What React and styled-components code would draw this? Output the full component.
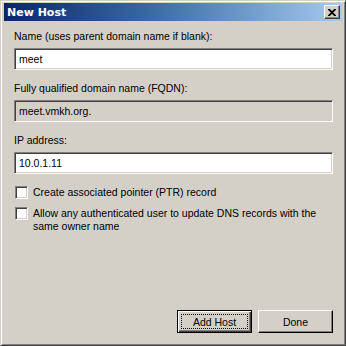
import styled, { createGlobalStyle } from 'styled-components';

const Global = createGlobalStyle`
  html, body { margin: 0; padding: 0; background: #d4d0c8; }
  body { font-family: "Liberation Sans", Arial, sans-serif; font-size: 10.5px; color: #000; }
`;

const Window = styled.div`
  width: 346px;
  height: 346px;
  box-sizing: border-box;
  background: #d4d0c8;
  border-left: 1px solid #d4d0c8;
  border-top: 1px solid #d4d0c8;
  border-right: 1px solid #404040;
  border-bottom: 1px solid #404040;
  box-shadow: inset 1px 1px 0 #ffffff, inset -1px -1px 0 #808080;
  padding: 2px 3px 3px 3px;
  display: flex;
  flex-direction: column;
`;

const TitleBar = styled.div`
  height: 18px;
  flex: none;
  display: flex;
  align-items: center;
  justify-content: space-between;
  padding: 0 2px 0 3px;
  background: linear-gradient(to right, #0a246a 0%, #3a6ea5 45%, #a6caf0 100%);
`;

const Title = styled.span`
  color: #fff;
  font-family: "DejaVu Sans", sans-serif;
  font-weight: bold;
  font-size: 11px;
`;

const CloseBtn = styled.div`
  width: 16px;
  height: 14px;
  box-sizing: border-box;
  background: #d4d0c8;
  border-left: 1px solid #fff;
  border-top: 1px solid #fff;
  border-right: 1px solid #404040;
  border-bottom: 1px solid #404040;
  box-shadow: inset -1px -1px 0 #808080;
  display: flex;
  align-items: center;
  justify-content: center;
`;

const Body = styled.div`
  flex: 1;
  display: flex;
  flex-direction: column;
  padding: 9px 9px 0 10px;
`;

const Label = styled.div`
  line-height: 13px;
  margin-bottom: 5px;
`;

const Field = styled.div`
  height: 22px;
  box-sizing: border-box;
  background: ${p => (p.$readOnly ? '#d4d0c8' : '#fff')};
  border-left: 1px solid #808080;
  border-top: 1px solid #808080;
  border-right: 1px solid #fff;
  border-bottom: 1px solid #fff;
  box-shadow: inset 1px 1px 0 #404040, inset -1px -1px 0 #d4d0c8;
  padding: 0 4px;
  display: flex;
  align-items: center;
  margin-bottom: ${p => p.$gap}px;
`;

const CheckRow = styled.div`
  display: flex;
  align-items: flex-start;
  gap: 5px;
  margin-bottom: 8px;
  line-height: 13px;
  padding-left: 1px;
`;

const Box = styled.div`
  width: 13px;
  height: 13px;
  flex: none;
  box-sizing: border-box;
  background: #fff;
  border-left: 1px solid #808080;
  border-top: 1px solid #808080;
  border-right: 1px solid #fff;
  border-bottom: 1px solid #fff;
  box-shadow: inset 1px 1px 0 #404040, inset -1px -1px 0 #d4d0c8;
`;

const Footer = styled.div`
  margin-top: auto;
  display: flex;
  justify-content: flex-end;
  gap: 6px;
  padding-bottom: 9px;
`;

const Button = styled.div`
  width: 75px;
  height: 23px;
  box-sizing: border-box;
  display: flex;
  align-items: center;
  justify-content: center;
  background: #d4d0c8;
  border-left: 1px solid ${p => (p.$default ? '#000' : '#fff')};
  border-top: 1px solid ${p => (p.$default ? '#000' : '#fff')};
  border-right: 1px solid #000;
  border-bottom: 1px solid #000;
  box-shadow: ${p =>
    p.$default
      ? 'inset 1px 1px 0 #fff, inset -1px -1px 0 #404040, inset -2px -2px 0 #808080'
      : 'inset -1px -1px 0 #808080'};
  position: relative;
`;

const Focus = styled.div`
  position: absolute;
  inset: 3px;
  border: 1px dotted #000;
`;

export default function App() {
  return (
    <>
      <Global />
      <Window>
        <TitleBar>
          <Title>New Host</Title>
          <CloseBtn>
            <svg width="8" height="7" viewBox="0 0 8 7">
              <path d="M0 0 L7 7 M1 0 L8 7 M7 0 L0 7 M8 0 L1 7" stroke="#000" strokeWidth="1.2" />
            </svg>
          </CloseBtn>
        </TitleBar>
        <Body>
          <Label>Name (uses parent domain name if blank):</Label>
          <Field $gap={12}>meet</Field>
          <Label>Fully qualified domain name (FQDN):</Label>
          <Field $readOnly $gap={12}>meet.vmkh.org.</Field>
          <Label>IP address:</Label>
          <Field $gap={12}>10.0.1.11</Field>
          <CheckRow>
            <Box />
            <span>Create associated pointer (PTR) record</span>
          </CheckRow>
          <CheckRow>
            <Box />
            <span>Allow any authenticated user to update DNS records with the same owner name</span>
          </CheckRow>
          <Footer>
            <Button $default>
              <Focus />
              Add Host
            </Button>
            <Button>Done</Button>
          </Footer>
        </Body>
      </Window>
    </>
  );
}
